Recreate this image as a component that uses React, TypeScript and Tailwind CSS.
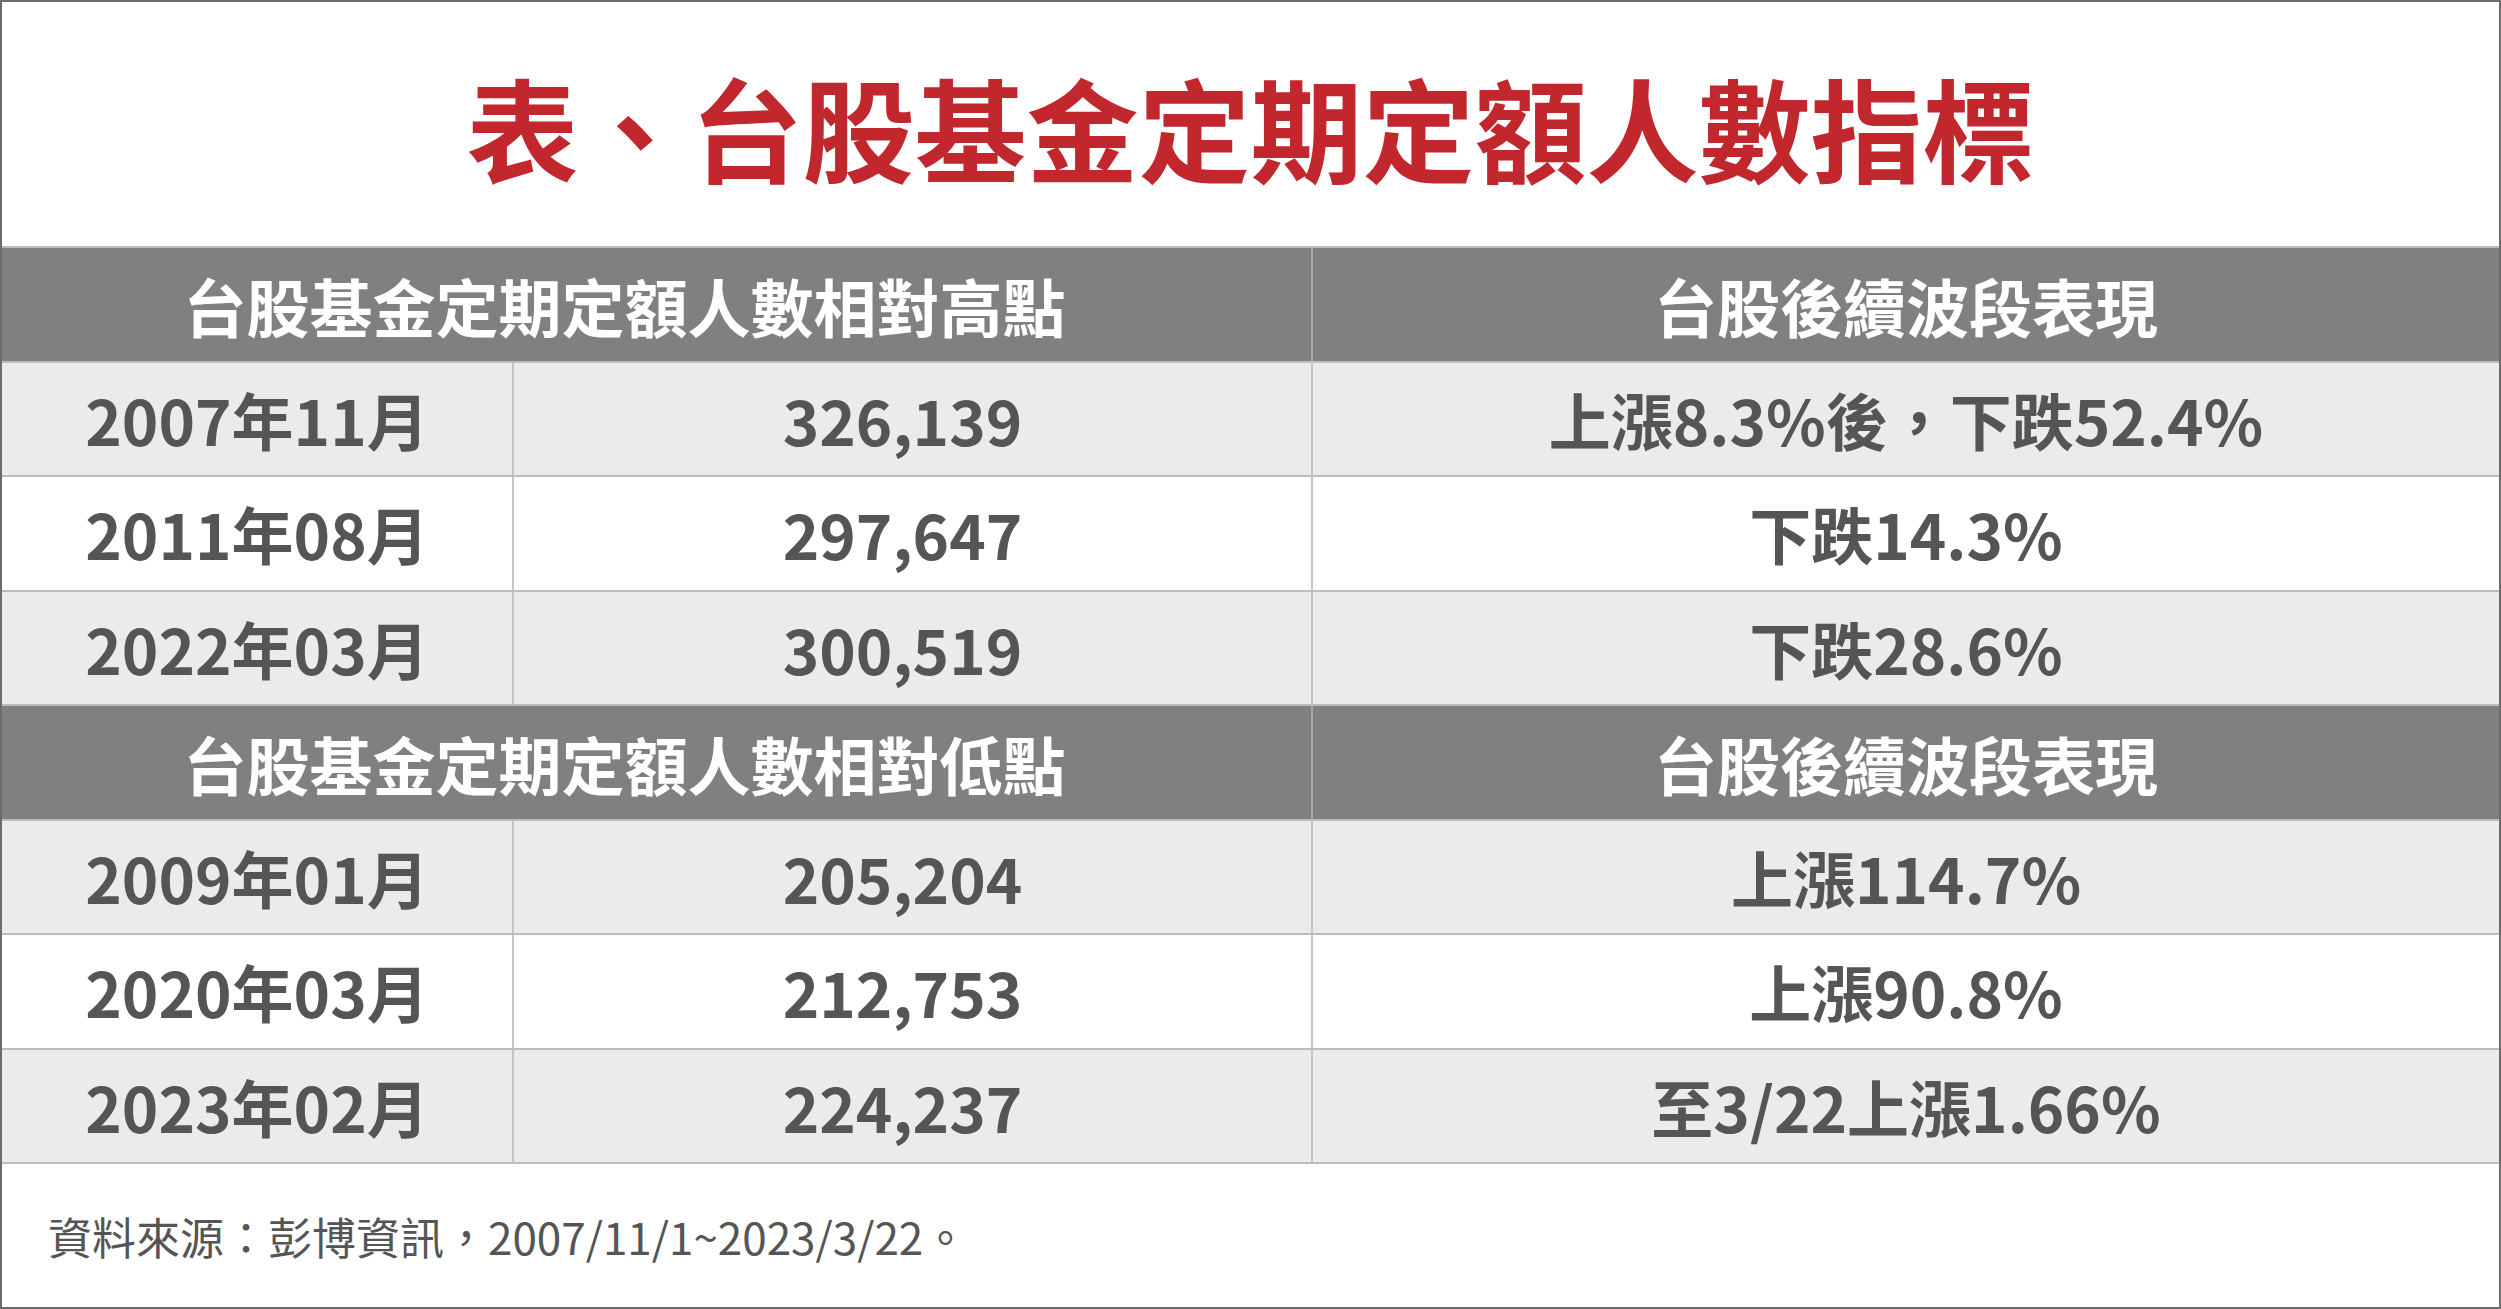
import React from "react";

type Row = { date: string; count: string; result: string; shaded: boolean };

const HIGH_ROWS: Row[] = [
  { date: "2007年11月", count: "326,139", result: "上漲8.3%後，下跌52.4%", shaded: true },
  { date: "2011年08月", count: "297,647", result: "下跌14.3%", shaded: false },
  { date: "2022年03月", count: "300,519", result: "下跌28.6%", shaded: true },
];

const LOW_ROWS: Row[] = [
  { date: "2009年01月", count: "205,204", result: "上漲114.7%", shaded: true },
  { date: "2020年03月", count: "212,753", result: "上漲90.8%", shaded: false },
  { date: "2023年02月", count: "224,237", result: "至3/22上漲1.66%", shaded: true },
];

function HeaderRow({ left }: { left: string }) {
  return (
    <div className="grid grid-cols-[1309px_1fr] h-[114.5px] bg-[#808080] border-b-2 border-[#bdbdbd] text-white font-bold text-[63px] leading-none">
      <div className="flex items-center justify-center pr-[64px]">{left}</div>
      <div className="flex items-center justify-center border-l-2 border-[#a9a9a9]">台股後續波段表現</div>
    </div>
  );
}

function DataRow({ row }: { row: Row }) {
  return (
    <div
      className={
        "grid grid-cols-[510px_799px_1fr] h-[114.5px] border-b-2 border-[#bdbdbd] text-[#555555] font-bold text-[62px] leading-none " +
        (row.shaded ? "bg-[#ebebeb]" : "bg-white")
      }
    >
      <div className="flex items-center justify-center">{row.date}</div>
      <div className="flex items-center justify-center border-l-2 border-[#c4c4c4] pr-[20px]">{row.count}</div>
      <div className="flex items-center justify-center border-l-2 border-[#c4c4c4]">{row.result}</div>
    </div>
  );
}

export default function App() {
  return (
    <div className="w-[2501px] h-[1309px] border-2 border-[#6b6b6b] bg-white flex flex-col font-['Noto_Sans_CJK_TC','Noto_Sans_CJK_SC',sans-serif]">
      <div className="h-[244px] pt-[4px] flex items-center justify-center text-[112px] font-bold leading-none text-[#c1272d]">
        表、台股基金定期定額人數指標
      </div>

      <div className="border-t-2 border-[#bdbdbd]">
        <HeaderRow left="台股基金定期定額人數相對高點" />
        {HIGH_ROWS.map((r) => (
          <DataRow key={r.date} row={r} />
        ))}
        <HeaderRow left="台股基金定期定額人數相對低點" />
        {LOW_ROWS.map((r) => (
          <DataRow key={r.date} row={r} />
        ))}
      </div>

      <div className="flex-1 flex items-center pl-[46px] text-[44px] leading-none text-[#555555]">
        資料來源：彭博資訊，2007/11/1~2023/3/22。
      </div>
    </div>
  );
}
